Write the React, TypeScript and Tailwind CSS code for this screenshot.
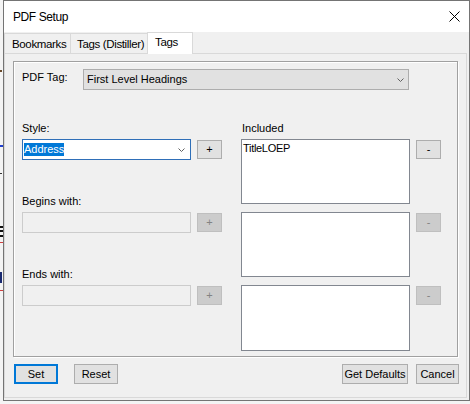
import React from "react";

function Chevron() {
  return (
    <svg width="7" height="4" viewBox="0 0 7 4" className="block">
      <polyline points="0.5,0.5 3.5,3.5 6.5,0.5" fill="none" stroke="#606060" strokeWidth="1" />
    </svg>
  );
}

function SmallBtn({ label, disabled }: { label: string; disabled?: boolean }) {
  return (
    <div
      className={
        disabled
          ? "w-[25px] h-[19px] mt-[1px] border border-[#bfbfbf] bg-[#cccccc] text-[#838383] flex items-center justify-center text-[11px] leading-[13px]"
          : "w-[25px] h-[19px] mt-[1px] border border-[#adadad] bg-[#e1e1e1] text-black flex items-center justify-center text-[11px] leading-[13px]"
      }
    >
      {label}
    </div>
  );
}

function Btn({ label, w, focused }: { label: string; w: string; focused?: boolean }) {
  return (
    <div
      className={
        (focused
          ? "border-2 border-[#0078d7] "
          : "border border-[#adadad] ") +
        w +
        " h-[20px] bg-[#e1e1e1] flex items-center justify-center text-[11px] leading-[13px] text-black"
      }
    >
      {label}
    </div>
  );
}

export default function App() {
  return (
    <div className="relative w-[470px] h-[404px] bg-[#f4f4f4] overflow-hidden font-['Liberation_Sans',Arial,sans-serif] text-black">
      {/* background window remnants at the far left */}
      <div className="absolute left-0 top-[70px] w-[2px] h-[2px] bg-[#6b4a2a]" />
      <div className="absolute left-0 top-[145px] w-[3px] h-[2px] bg-[#2040d0]" />
      <div className="absolute left-0 top-[173px] w-[2px] h-[1px] bg-[#333]" />
      <div className="absolute left-0 top-[226px] w-[3px] h-[2px] bg-[#111]" />
      <div className="absolute left-0 top-[230px] w-[3px] h-[2px] bg-[#111]" />
      <div className="absolute left-0 top-[235px] w-[3px] h-[2px] bg-[#111]" />
      <div className="absolute left-0 top-[242px] w-[3px] h-[1px] bg-[#d04040]" />
      <div className="absolute left-0 top-[272px] w-[2px] h-[11px] bg-[#1a2a70]" />
      <div className="absolute left-0 top-[290px] w-[3px] h-[1px] bg-[#d04040]" />

      <div className="ml-[3px] w-[467px] h-[401px] border border-[#747474] bg-[#f0f0f0] flex flex-col">
        {/* title bar */}
        <div className="h-[31px] bg-white flex items-center justify-between pl-[9px] pr-[9px]">
          <span className="text-[12px] leading-[14px] tracking-[-0.4px]">PDF Setup</span>
          <svg width="11" height="11" viewBox="0 0 11 11" className="block">
            <line x1="0.5" y1="0.5" x2="10.5" y2="10.5" stroke="#000" strokeWidth="1" />
            <line x1="10.5" y1="0.5" x2="0.5" y2="10.5" stroke="#000" strokeWidth="1" />
          </svg>
        </div>

        {/* tabs */}
        <div className="h-[21px] flex items-end text-[11.5px] leading-[13px] tracking-[-0.35px]">
          <div className="w-[67px] h-[20px] border border-b-0 border-[#d9d9d9] bg-[#f0f0f0] pl-[7px] pt-[4px]">
            Bookmarks
          </div>
          <div className="-ml-px w-[78px] h-[20px] border border-b-0 border-[#d9d9d9] bg-[#f0f0f0] pl-[6px] pt-[4px]">
            Tags (Distiller)
          </div>
          <div className="relative z-10 -ml-px self-start w-[46px] h-[22px] border border-b-0 border-[#d9d9d9] bg-white pl-[7px] pt-[3px]">
            Tags
          </div>
        </div>

        {/* panel */}
        <div className="w-[463px] h-[345px] border border-[#d9d9d9] bg-[#f0f0f0] pl-[8px] pt-[7px] text-[11px] leading-[13px]">
          <div className="w-[445px] h-[296px] border border-[#a0a0a0] shadow-[1px_1px_0_#ffffff,inset_1px_1px_0_#ffffff] pl-[8px] pt-[7px]">
            {/* PDF Tag row */}
            <div className="flex h-[21px]">
              <div className="w-[61px] pt-[2px]">PDF Tag:</div>
              <div className="w-[326px] h-[21px] border border-[#adadad] bg-[#e1e1e1] flex items-center justify-between pl-[3px] pr-[4px]">
                <span>First Level Headings</span>
                <Chevron />
              </div>
            </div>

            <div className="mt-[32px] flex gap-[19px]">
              {/* left column */}
              <div className="w-[200px] flex flex-col">
                <div className="h-[13px]">Style:</div>
                <div className="mt-[4px] flex items-start gap-[6px]">
                  <div className="w-[169px] h-[21px] border border-[#2f6fb8] bg-white flex items-center justify-between pl-[1px] pr-[5px]">
                    <span className="bg-[#0078d7] text-white">Address</span>
                    <Chevron />
                  </div>
                  <SmallBtn label="+" />
                </div>

                <div className="mt-[35px] h-[13px]">Begins with:</div>
                <div className="mt-[4px] flex items-start gap-[6px]">
                  <div className="w-[169px] h-[21px] border border-[#cccccc] bg-[#f0f0f0]" />
                  <SmallBtn label="+" disabled />
                </div>

                <div className="mt-[35px] h-[13px]">Ends with:</div>
                <div className="mt-[4px] flex items-start gap-[6px]">
                  <div className="w-[169px] h-[21px] border border-[#cccccc] bg-[#f0f0f0]" />
                  <SmallBtn label="+" disabled />
                </div>
              </div>

              {/* right column */}
              <div className="w-[200px] flex flex-col">
                <div className="h-[13px] pl-[1px]">Included</div>
                <div className="mt-[4px] flex items-start gap-[6px]">
                  <div className="w-[169px] h-[65px] border border-[#828790] bg-white pl-[1px] pt-[2px] tracking-[-0.3px]">
                    TitleLOEP
                  </div>
                  <SmallBtn label="-" />
                </div>
                <div className="mt-[8px] flex items-start gap-[6px]">
                  <div className="w-[169px] h-[65px] border border-[#828790] bg-white" />
                  <SmallBtn label="-" disabled />
                </div>
                <div className="mt-[8px] flex items-start gap-[6px]">
                  <div className="w-[169px] h-[66px] border border-[#828790] bg-white" />
                  <SmallBtn label="-" disabled />
                </div>
              </div>
            </div>
          </div>

          {/* bottom buttons */}
          <div className="mt-[7px] ml-[1px] mr-[7px] flex items-start">
            <Btn label="Set" w="w-[44px]" focused />
            <div className="ml-[16px]">
              <Btn label="Reset" w="w-[44px]" />
            </div>
            <div className="flex-1" />
            <Btn label="Get Defaults" w="w-[66px]" />
            <div className="ml-[8px]">
              <Btn label="Cancel" w="w-[43px]" />
            </div>
          </div>
        </div>
      </div>
    </div>
  );
}
